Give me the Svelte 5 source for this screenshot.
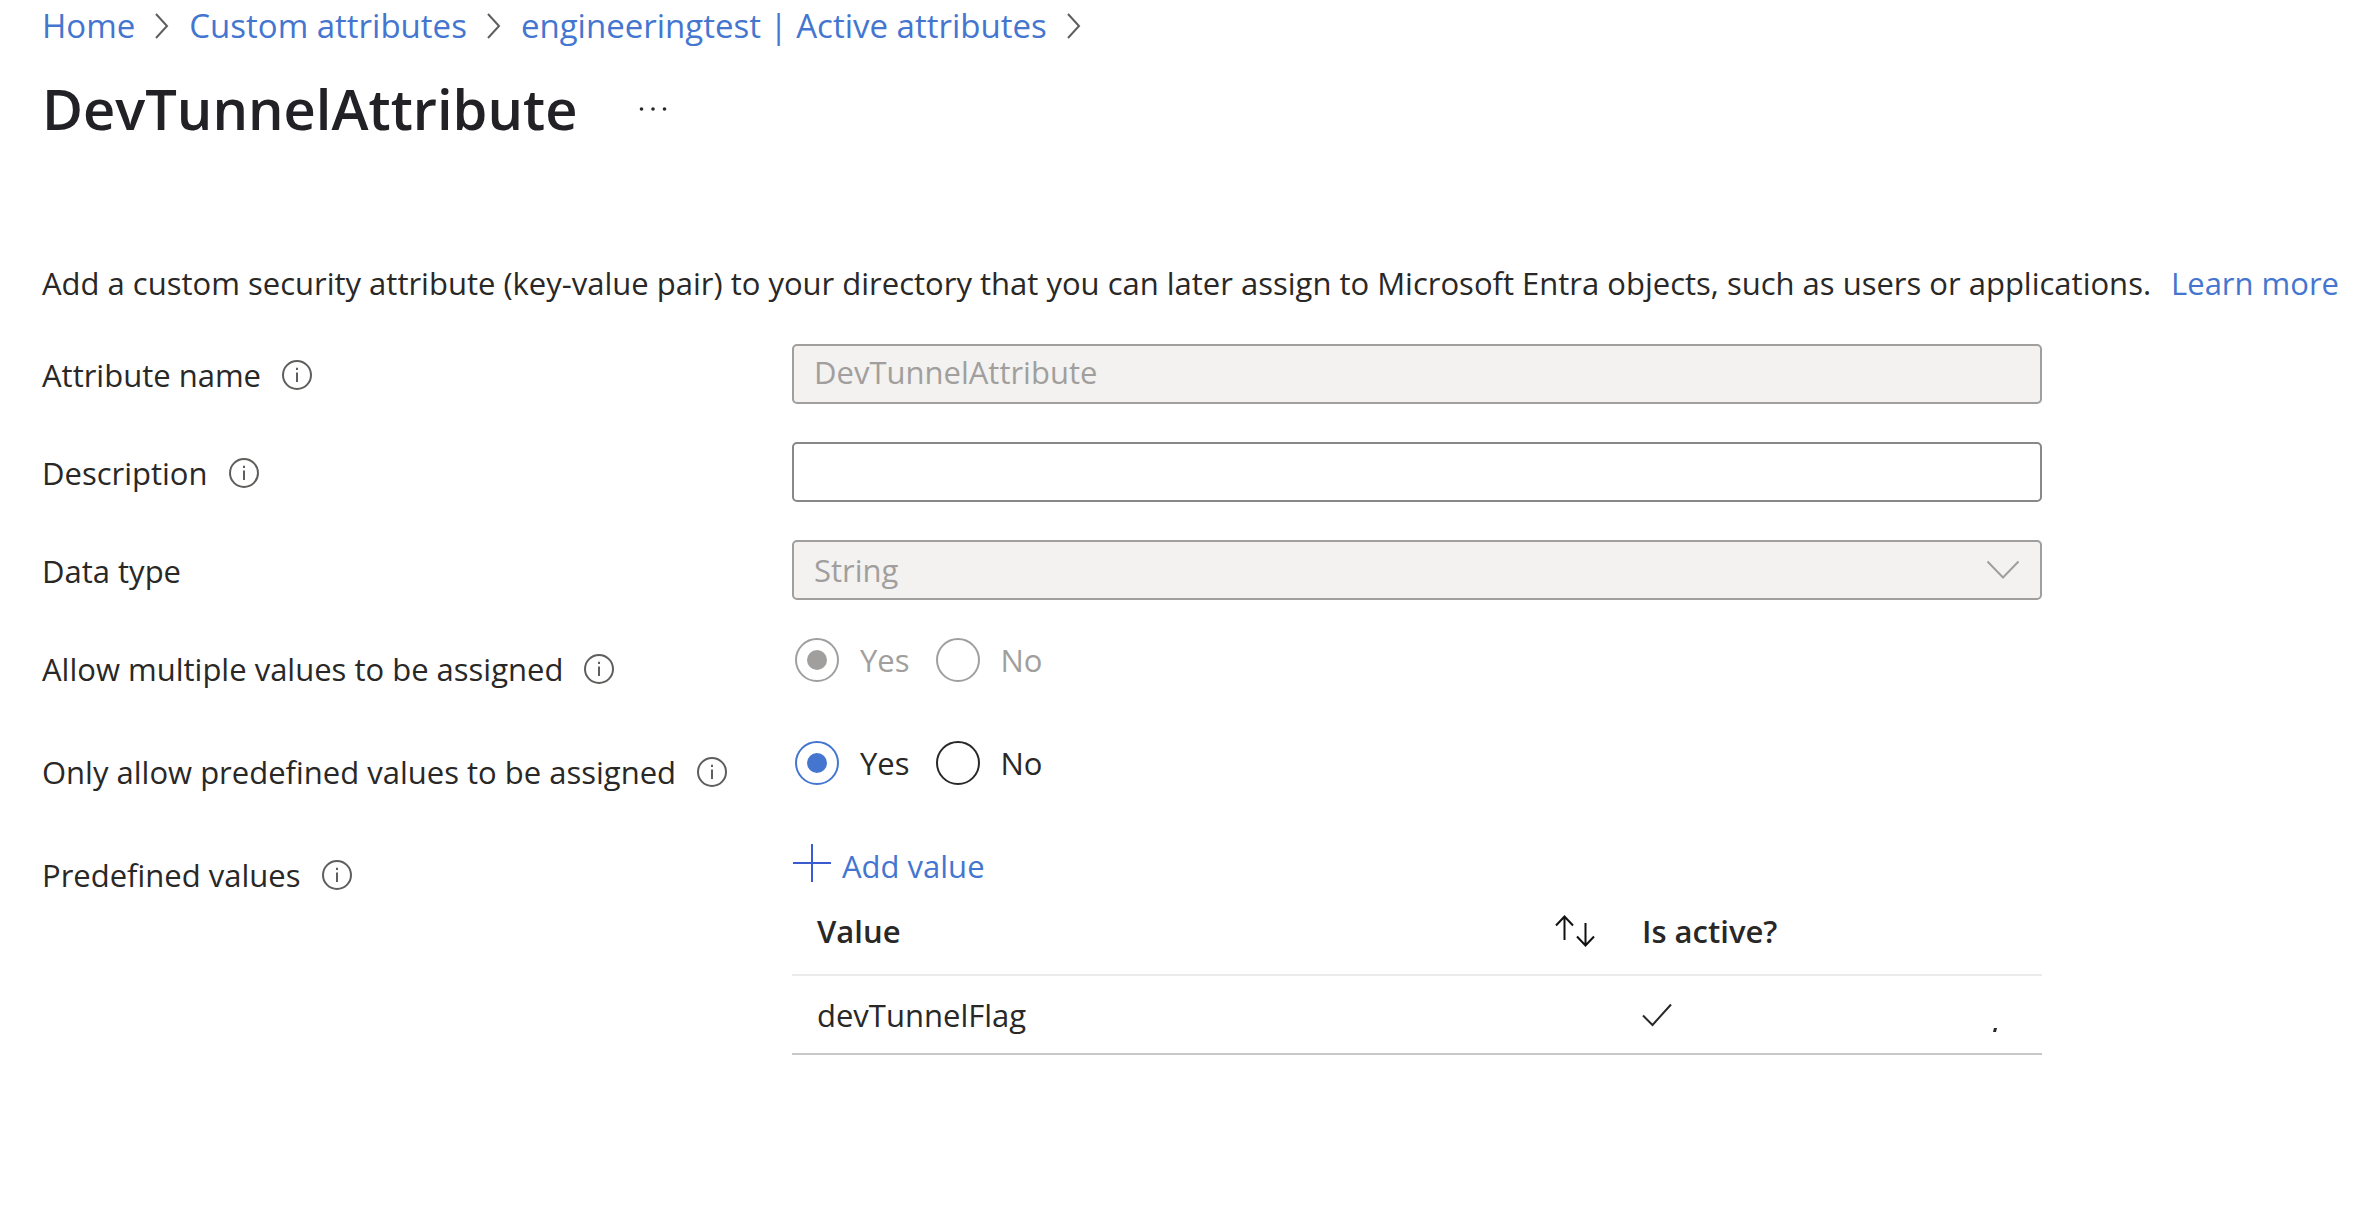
<script>
  const crumbs = ['Home', 'Custom attributes', 'engineeringtest | Active attributes'];
  const values = [{ name: 'devTunnelFlag', active: true }];

  let description = $state('');
  let multiple = $state('yes');
  let predefined = $state('yes');
</script>

{#snippet info(topic)}
  <button class="info" type="button" aria-label={`About ${topic}`}>
    <svg viewBox="0 0 32 32" aria-hidden="true">
      <circle cx="16" cy="16" r="14" />
      <path d="M16 13.5V23M16 8.7V10.9" />
    </svg>
  </button>
{/snippet}

<main class="page">
  <nav class="crumbs" aria-label="Breadcrumb">
    {#each crumbs as crumb}
      <a href="#top">{crumb}</a>
      <svg class="sep" viewBox="0 0 14 26" aria-hidden="true"><path d="M1 1L12 13L1 25" /></svg>
    {/each}
  </nav>

  <header class="title">
    <h1>DevTunnelAttribute</h1>
    <button class="more" type="button" aria-label="More options">
      <svg viewBox="0 0 28 6" aria-hidden="true">
        <circle cx="2.5" cy="4" r="1.8" /><circle cx="14" cy="4" r="1.8" /><circle cx="25.5" cy="4" r="1.8" />
      </svg>
    </button>
  </header>

  <p class="intro">
    <span>Add a custom security attribute (key-value pair) to your directory that you can later assign to Microsoft Entra objects, such as users or applications.</span>
    <a href="#learn">Learn more</a>
  </p>

  <form class="form">
    <div class="row">
      <div class="label"><label for="name">Attribute name</label>{@render info('attribute name')}</div>
      <input id="name" class="box" type="text" value="DevTunnelAttribute" disabled />
    </div>

    <div class="row">
      <div class="label"><label for="description">Description</label>{@render info('description')}</div>
      <input id="description" class="box" type="text" bind:value={description} />
    </div>

    <div class="row">
      <div class="label"><label for="type">Data type</label></div>
      <div class="select">
        <select id="type" class="box" disabled><option>String</option></select>
        <svg viewBox="0 0 34 20" aria-hidden="true"><path d="M1.5 1.5L17 17.5L32.5 1.5" /></svg>
      </div>
    </div>

    <div class="row choice">
      <div class="label"><span id="multiple">Allow multiple values to be assigned</span>{@render info('multiple values')}</div>
      <div class="radios" role="radiogroup" aria-labelledby="multiple">
        <label class="off"><input type="radio" name="multiple" value="yes" bind:group={multiple} disabled />Yes</label>
        <label class="off"><input type="radio" name="multiple" value="no" bind:group={multiple} disabled />No</label>
      </div>
    </div>

    <div class="row choice">
      <div class="label"><span id="predefined">Only allow predefined values to be assigned</span>{@render info('predefined values only')}</div>
      <div class="radios" role="radiogroup" aria-labelledby="predefined">
        <label><input type="radio" name="predefined" value="yes" bind:group={predefined} />Yes</label>
        <label><input type="radio" name="predefined" value="no" bind:group={predefined} />No</label>
      </div>
    </div>

    <div class="row">
      <div class="label"><span>Predefined values</span>{@render info('predefined values')}</div>
      <div>
        <button class="add" type="button">
          <svg viewBox="0 0 40 44" aria-hidden="true"><path d="M1 19H39M20 0V38" /></svg>Add value
        </button>
        <table>
          <colgroup><col class="c-value" /><col /><col class="c-menu" /></colgroup>
          <thead>
            <tr>
              <th scope="col">
                <div class="head">
                  Value
                  <button class="sort" type="button" aria-label="Sort by value">
                    <svg viewBox="0 0 40 32" aria-hidden="true"><path d="M9.5 25V1.5M1 10.5L9.5 1.5L18 10.5M30.5 8V31M22 21.5L30.5 30.5L39 21.5" /></svg>
                  </button>
                </div>
              </th>
              <th scope="col" colspan="2">Is active?</th>
            </tr>
          </thead>
          <tbody>
            {#each values as value}
              <tr>
                <td>{value.name}</td>
                <td>
                  {#if value.active}
                    <svg class="tick" role="img" aria-label="Active" viewBox="0 0 30 24"><path d="M1 12.5L10.5 22L29 1.5" /></svg>
                  {/if}
                </td>
                <td>
                  <button class="menu" type="button" aria-label="Value options">
                    <svg viewBox="0 0 4 44" aria-hidden="true"><path d="M1 35H4L3 39H0Z" /></svg>
                  </button>
                </td>
              </tr>
            {/each}
          </tbody>
        </table>
      </div>
    </div>
  </form>
</main>

<style>
  :global(body) {
    margin: 0;
    background: #fff;
  }

  .page {
    padding: 4px 8px 40px 42px;
    color: #292827;
    font-family: 'Open Sans', 'Noto Sans', sans-serif;
    font-size: 31px;
    line-height: 44px;
  }

  svg {
    display: block;
    flex: none;
    fill: none;
    stroke: currentColor;
    stroke-width: 2;
  }

  a {
    color: #4476d0;
    text-decoration: none;
  }

  button {
    padding: 0;
    border: 0;
    background: none;
    color: inherit;
    font: inherit;
    cursor: pointer;
  }

  .crumbs {
    display: flex;
    flex-wrap: wrap;
    align-items: center;
    gap: 0 20px;
    font-size: 33px;
  }

  .sep {
    width: 14px;
    height: 26px;
    color: #605e5c;
  }

  .title {
    display: flex;
    align-items: center;
    gap: 62px;
    margin-top: 20px;
  }

  h1 {
    margin: 0;
    color: #212126;
    font-size: 56px;
    font-weight: 600;
    line-height: 80px;
  }

  .more svg {
    width: 28px;
    height: 6px;
    fill: currentColor;
    stroke: none;
  }

  .intro {
    display: flex;
    flex-wrap: wrap;
    gap: 0 20px;
    margin: 113px 0 39px;
  }

  .form {
    display: grid;
    gap: 38px;
    max-width: 2000px;
  }

  .row {
    display: grid;
    grid-template-columns: minmax(0, 3fr) minmax(0, 5fr);
    align-items: start;
    min-height: 60px;
  }

  .choice {
    min-height: 65px;
  }

  .label {
    display: flex;
    align-items: center;
    gap: 20px;
    padding-top: 9px;
  }

  .info {
    flex: none;
    color: #605e5c;
  }

  .info svg {
    width: 32px;
    height: 32px;
  }

  .box {
    box-sizing: border-box;
    width: 100%;
    height: 60px;
    margin: 0;
    padding: 0 20px 4px;
    border: 2px solid #8a8886;
    border-radius: 5px;
    background: #fff;
    color: inherit;
    font: inherit;
    appearance: none;
  }

  .box:disabled {
    border-color: #a19f9d;
    background: #f3f2f1;
    color: #a19f9d;
    opacity: 1;
  }

  .select {
    display: grid;
    align-items: center;
  }

  .select > * {
    grid-area: 1 / 1;
  }

  .select .box {
    padding-bottom: 0;
  }

  .select svg {
    justify-self: end;
    width: 34px;
    height: 20px;
    margin-right: 22px;
    color: #a19f9d;
    pointer-events: none;
  }

  .radios {
    display: flex;
    gap: 26px;
    padding-left: 3px;
  }

  .radios label {
    display: flex;
    align-items: center;
    gap: 21px;
  }

  .radios input {
    display: grid;
    place-items: center;
    width: 44px;
    height: 44px;
    margin: 0;
    border: 2px solid #292827;
    border-radius: 50%;
    appearance: none;
  }

  .radios input:checked {
    border-color: #4476d0;
  }

  .radios input:checked::before {
    width: 20px;
    height: 20px;
    border-radius: 50%;
    background: #4476d0;
    content: '';
  }

  .radios .off {
    color: #a19f9d;
  }

  .radios input:disabled {
    border-color: #a19f9d;
  }

  .radios input:disabled::before {
    background: #a19f9d;
  }

  .add {
    display: flex;
    gap: 10px;
    color: #4476d0;
  }

  .add svg {
    width: 40px;
    height: 44px;
    color: #3b5bd0;
  }

  table {
    width: 100%;
    border-collapse: collapse;
    table-layout: fixed;
  }

  .c-value {
    width: 66%;
  }

  .c-menu {
    width: 8%;
  }

  th {
    padding: 21px 22px 21px 25px;
    border-bottom: 2px solid #edebe9;
    font-weight: 600;
    text-align: left;
  }

  td {
    padding: 17px 22px 16px 25px;
    border-bottom: 2px solid #c8c8c8;
  }

  .head {
    display: flex;
    align-items: center;
    justify-content: space-between;
  }

  .sort svg {
    width: 40px;
    height: 32px;
    color: #111;
  }

  .tick {
    width: 30px;
    height: 24px;
  }

  td:last-child {
    padding-left: 0;
  }

  .menu {
    display: block;
    margin-left: auto;
    margin-right: 23px;
  }

  .menu svg {
    width: 4px;
    height: 44px;
    fill: currentColor;
    stroke: none;
  }
</style>
